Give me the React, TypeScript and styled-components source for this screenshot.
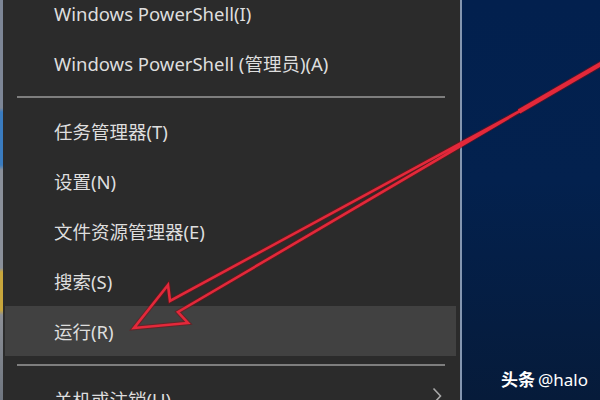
import React from "react";
import styled, { createGlobalStyle } from "styled-components";

const GlobalStyle = createGlobalStyle`
  html, body {
    margin: 0;
    padding: 0;
    width: 600px;
    height: 400px;
    overflow: hidden;
    background: #2b2b2b;
  }
`;

const Screen = styled.div`
  position: relative;
  display: flex;
  width: 600px;
  height: 400px;
  overflow: hidden;
  font-family: "Noto Sans", "Noto Sans CJK SC", sans-serif;
`;

// sliver of the window behind the menu
const EdgeStrip = styled.div`
  width: 3px;
  flex-shrink: 0;
  background: linear-gradient(
    to bottom,
    #7d8696 0px,
    #7d8696 108px,
    #3a7cc0 112px,
    #3a7cc0 165px,
    #8a909a 170px,
    #8a909a 268px,
    #c8a63c 272px,
    #c8a63c 310px,
    #8c8f96 315px,
    #6f7680 100%
  );
`;

const Menu = styled.div`
  width: 457px;
  flex-shrink: 0;
  background: #2b2b2b;
  border-right: 2px solid #8496b0;
  overflow: hidden;
`;

const List = styled.div`
  display: flex;
  flex-direction: column;
  margin-top: -12px;
  padding: 0 4px 0 2px;
`;

const Item = styled.div<{ $active?: boolean }>`
  height: 50px;
  flex-shrink: 0;
  display: flex;
  align-items: center;
  justify-content: space-between;
  padding: 0 14px 0 49px;
  background: ${({ $active }) => ($active ? "#414141" : "transparent")};
  color: #dedede;
  font-size: 18.5px;
  white-space: nowrap;
`;

const Separator = styled.div`
  height: 18px;
  flex-shrink: 0;
  display: flex;
  align-items: center;
  padding: 0 11px 0 12px;

  &::after {
    content: "";
    flex: 1;
    height: 2px;
    background: #7e7e7e;
  }
`;

const Chevron = styled.svg`
  width: 10px;
  height: 18px;
  margin-top: -6px;
`;

const Desktop = styled.div`
  flex: 1;
  display: flex;
  flex-direction: column;
  justify-content: flex-end;
  align-items: flex-end;
  padding: 0 12px 10px 0;
  background: linear-gradient(to bottom, #02204e 0%, #03214e 45%, #061b3a 100%);
`;

const Watermark = styled.div`
  color: #ffffff;
  font-size: 17px;
  line-height: 20px;
  white-space: nowrap;

  b {
    font-weight: 700;
    margin-right: 3px;
  }
`;

const ArrowLayer = styled.svg`
  position: absolute;
  left: 0;
  top: 0;
  width: 600px;
  height: 400px;
  pointer-events: none;
`;

type Entry = { label: string; active?: boolean; more?: boolean } | "sep";

const entries: Entry[] = [
  { label: "Windows PowerShell(I)" },
  { label: "Windows PowerShell (管理员)(A)" },
  "sep",
  { label: "任务管理器(T)" },
  { label: "设置(N)" },
  { label: "文件资源管理器(E)" },
  { label: "搜索(S)" },
  { label: "运行(R)", active: true },
  "sep",
  { label: "关机或注销(U)", more: true },
];

const head = "520,111 170,301 168,285 134,328 188,323 178,312 520,111";
const tail = "M519 111.5 L606 61";

export default function App() {
  return (
    <Screen>
      <GlobalStyle />
      <EdgeStrip />
      <Menu>
        <List>
          {entries.map((e, i) =>
            e === "sep" ? (
              <Separator key={i} />
            ) : (
              <Item key={i} $active={e.active}>
                <span>{e.label}</span>
                {e.more && (
                  <Chevron viewBox="0 0 10 18">
                    <path d="M1.5 1.5 L8.5 9 L1.5 16.5" fill="none" stroke="#a8a8a8" strokeWidth="1.6" />
                  </Chevron>
                )}
              </Item>
            )
          )}
        </List>
      </Menu>
      <Desktop>
        <Watermark>
          <b>头条</b>@halo
        </Watermark>
      </Desktop>
      <ArrowLayer viewBox="0 0 600 400">
        <g fill="none" strokeLinejoin="miter" strokeMiterlimit={6}>
          <polygon points={head} stroke="#7a1016" strokeWidth="4.5" opacity="0.55" />
          <path d={tail} stroke="#7a1016" strokeWidth="6.5" opacity="0.55" />
          <polygon points={head} stroke="#e3283a" strokeWidth="2.6" />
          <path d={tail} stroke="#e3283a" strokeWidth="4.5" />
        </g>
      </ArrowLayer>
    </Screen>
  );
}
